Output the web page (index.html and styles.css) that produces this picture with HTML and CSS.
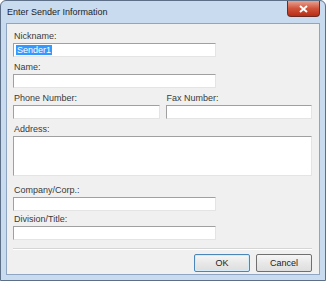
FILE: index.html
```html
<!DOCTYPE html>
<html lang="en">
<head>
  <meta charset="UTF-8" />
  <title>Enter Sender Information</title>
  <link rel="stylesheet" href="styles.css">
</head>
<body>
  <div class="window">
    <!-- Title bar -->
    <div class="titlebar">
      <span class="title">Enter Sender Information</span>
      <div class="close">
        <svg width="9" height="8" viewBox="0 0 9 8"><path d="M1 1 L8 7 M8 1 L1 7" stroke="#fff" stroke-width="2"/></svg>
      </div>
    </div>

    <!-- Client area -->
    <div class="client">
      <div class="field short">
        <label>Nickname:</label>
        <div class="box"><span class="sel">Sender1</span></div>
      </div>
      <div class="field short">
        <label>Name:</label>
        <div class="box"></div>
      </div>
      <div class="row">
        <div class="field">
          <label>Phone Number:</label>
          <div class="box"></div>
        </div>
        <div class="field">
          <label>Fax Number:</label>
          <div class="box"></div>
        </div>
      </div>
      <div class="field gap">
        <label>Address:</label>
        <div class="box tall"></div>
      </div>
      <div class="field short tight">
        <label>Company/Corp.:</label>
        <div class="box"></div>
      </div>
      <div class="field short">
        <label>Division/Title:</label>
        <div class="box"></div>
      </div>

      <div class="sep"></div>
      <div class="buttons">
        <button class="btn ok">OK</button>
        <button class="btn">Cancel</button>
      </div>
    </div>
  </div>
</body>
</html>
```

FILE: styles.css
```css
/* ---------- Base ---------- */
*, *::before, *::after { box-sizing: border-box; margin: 0; padding: 0; }
body {
  width: 327px; height: 282px; overflow: hidden;
  background: #fff;
  font-family: "Liberation Sans", Tahoma, sans-serif;
  font-size: 9px;
  color: #222;
}

/* ---------- Window frame ---------- */
.window {
  width: 326px; height: 281px;
  background: #c9dbef;
  border: 1px solid #5c6f86;
  border-radius: 6px 6px 0 0;
  padding: 0 5px 5px 5px;
  display: flex; flex-direction: column;
}
.titlebar {
  flex-shrink: 0;
  height: 22px; display: flex; align-items: center; justify-content: space-between;
  padding-left: 1px;
}
.title { font-size: 9px; color: #1e1e1e; }
.close {
  align-self: flex-start;
  width: 33px; height: 16px; margin-right: 0;
  border: 1px solid #6b2b22; border-top: none;
  border-radius: 0 0 4px 4px;
  background: linear-gradient(#e8a392, #d0533b 50%, #b92d14);
  display: flex; align-items: center; justify-content: center;
}

/* ---------- Client ---------- */
.client {
  flex: 1;
  background: #f0f0f0;
  border: 1px solid #8ea6c2;
  padding: 7px 7px 0 6px;
  display: flex; flex-direction: column;
}
.field { display: flex; flex-direction: column; margin-bottom: 5px; }
.field.short { width: 203px; }
.field.gap { margin-bottom: 9px; }
.field.tight { margin-bottom: 3px; }
label { height: 12px; line-height: 11px; padding-left: 1px; color: #3a3a3a; }
.box {
  height: 14px; background: #fff;
  border-top: 1px solid #a0a0a0; border-left: 1px solid #a0a0a0;
  border-right: 1px solid #e4e4e4; border-bottom: 1px solid #e4e4e4;
  padding: 0 0 0 2px; line-height: 12px;
}
.box.tall { height: 40px; }
.sel { background: #3399ff; color: #fff; padding: 0 1px; }

.row { display: flex; gap: 6px; }
.row .field { flex: 1; }

.sep {
  height: 2px; margin-top: 3px;
  border-top: 1px solid #d5d5d5; border-bottom: 1px solid #fff;
}
.buttons { display: flex; justify-content: flex-end; gap: 6px; margin-top: 4px; }
.btn {
  width: 56px; height: 18px;
  font-family: inherit; font-size: 9px; color: #222;
  background: linear-gradient(#f6f6f6, #e8e8e8 50%, #dedede);
  border: 1px solid #707070; border-radius: 2px;
}
.btn.ok { border-color: #4a87b8; box-shadow: inset 0 0 0 1px #d4ecfa; }
```
